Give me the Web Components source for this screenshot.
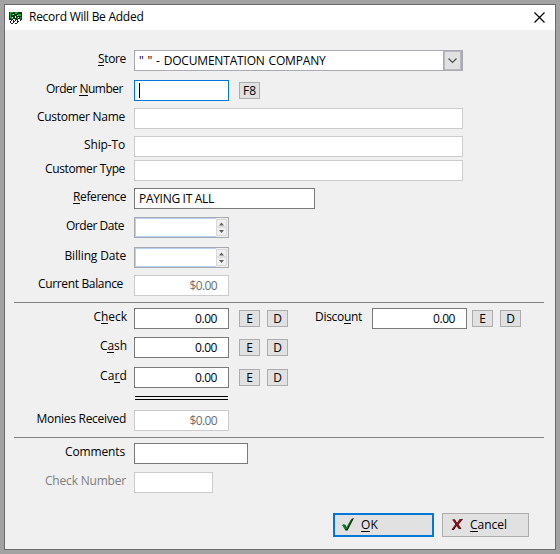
<!DOCTYPE html>
<html lang="en">
<head>
<meta charset="utf-8">
<title>Record Will Be Added</title>
<style>
html,body{margin:0;height:100%;overflow:hidden}
body{background:#a2a2a2;font:12px/16px "Open Sans","Noto Sans",sans-serif;color:#000}
</style>
</head>
<body>
<record-dialog></record-dialog>
<script>
const define=(name,html,ready)=>customElements.define(name,class extends HTMLElement{
  connectedCallback(){
    if(this.shadowRoot)return;
    const t=document.createElement('template');
    t.innerHTML=typeof html==='function'?html(this):html;
    this.attachShadow({mode:'open'}).append(t.content.cloneNode(true));
    if(ready)ready(this);
  }
});

/* A single-line text run spaced to a set width; "_" marks the access key. */
define('ui-text',el=>`<style>:host{display:block;white-space:pre;flex:none;height:16px}
span{display:inline-block}u{text-decoration:none;box-shadow:0 1px 0 currentColor;display:inline-block;height:14px;line-height:16px;vertical-align:top}</style><span>${el.getAttribute('text').replace(/_(.)/,'<u>$1</u>')}</span>`,
el=>{
  const s=el.shadowRoot.querySelector('span'),n=s.textContent.length,w=+el.getAttribute('w');
  if(w){s.style.letterSpacing=(w-s.getBoundingClientRect().width)/n+'px';el.style.width=w+'px';}
});

/* Bordered input box. kind: normal, off, focus, combo, date */
define('ui-field',el=>{
  const k=el.getAttribute('kind')||'normal',v=el.getAttribute('value')||'',w=el.getAttribute('w')||95;
  const c={normal:'#7a7a7a',off:'#cccccc',focus:'#0078d7',combo:'#a9aab4',date:'#a9aaaf'}[k];
  return `<style>:host{display:flex;box-sizing:border-box;flex:none;width:${w}px;height:21px;border:1px solid ${c};background:#fff;color:${k=='off'?'#6d6d6d':'#000'}}
  .v{padding:2px 0 0 4px;flex:1;${k=='combo'?'word-spacing:1px':''}}.r{padding:2px 11px 0 0;display:flex;justify-content:flex-end}
  i{display:block;width:1px;height:15px;background:#000;margin-top:0}
  .combo{width:19px;box-sizing:border-box;border:1px solid #a9aab4;border-width:0 1px 0 1px;box-shadow:inset 0 0 0 1px #b8b9be;background:#e1e1e1}
  .date{flex:1;border:1px solid #b3d3f3;border-right:0;box-sizing:border-box}
  .spin{width:12px;background:#f0f0f0}svg{display:block}</style>`+
  (k=='date'?`<div class="date"></div><div class="spin"><svg width="12" height="19"><path d="M.5 1.500h10v7.500H.5zM.5 9h10v8.500H.5z" fill="#f0f0f0" stroke="#d8d8d8"/><path d="M3 7.500h5L5.500 4.500zM3 12h5l-2.500 3z" fill="#606060"/></svg></div>`
  :`<div class="v ${el.hasAttribute('right')?'r':''}">${k=='focus'?'<i></i>':v?`<ui-text text='${v}' w="${el.getAttribute('tw')}"></ui-text>`:''}</div>`+
  (k=='combo'?'<div class="combo"><svg width="17" height="19"><path d="M4.500 7.500l4 4 4-4" fill="none" stroke="#505050" stroke-width="1.2"/></svg></div>':''))});

define('key-button',el=>`<style>:host{display:flex;justify-content:center;box-sizing:border-box;flex:none;width:21px;height:17px;border:1px solid #adadad;background:#e1e1e1}</style><ui-text text="${el.getAttribute('text')}" w="${el.getAttribute('tw')}"></ui-text>`);

/* Row: y gap above, label ending at x="end", then the slotted controls. */
define('form-row',el=>{
  const a=n=>el.getAttribute(n);
  return `<style>:host{display:flex;height:21px;margin-top:${a('gap')}px;padding-left:9px}
  .l{width:${a('end')-14}px;margin-right:${134-a('end')}px;padding-top:1px;display:flex;justify-content:flex-end;color:${el.hasAttribute('dim')?'#808080':'#000'}}
  ::slotted(key-button){margin:2px 0 0 7px}::slotted(key-button.first){margin-left:10px}::slotted(key-button.near){margin-left:5px}
  ::slotted(ui-text){margin:1px 10px 0 27px}</style>
  <div class="l"><ui-text text="${a('label')}" w="${a('w')}"></ui-text></div><slot></slot>`});

define('form-rule',el=>`<style>:host{display:block;height:${el.hasAttribute('double')?2:0}px;border-top:1px solid ${el.hasAttribute('double')?'#000;border-bottom:1px solid #000;width:93px;margin:8px 0 0 130px':'#838383;width:530px;margin:6px 0 0 9px'}}</style>`);

define('action-button',el=>{
  const ok=el.hasAttribute('primary');
  return `<style>:host{display:flex;align-items:flex-start;box-sizing:border-box;height:24px;width:${ok?101:87}px;border:${ok?'2px solid #0078d7':'1px solid #adadad'};background:#e1e1e1;padding:${ok?'2px 0 0 6px':'3px 0 0 7px'}}
  svg{flex:none;margin-right:6px}</style>
  <svg width="14" height="16" viewBox="0 0 14 16">${ok
   ?'<path d="M2 8.500l2-1 2 3.500 4.500-9L13 1 6.500 13.500H4.500z" fill="#111"/><path d="M1 8l2-1 2 4 4.500-8L12 1 5.500 12.500H4z" fill="#078a16"/>'
   :'<path d="M3 2.500h2l2 3.500 3-4h3L8.500 7.500l3 4.500H9L6.500 9 4 13H1.500l4-5.500z" fill="#210808"/><path d="M2 2.500h2.500L7 6l3-4h2L8 7.500l3 4H9L6.500 8.500 3.500 12H2l3.500-5z" fill="#900c18"/>'}</svg>
  <ui-text text="${el.getAttribute('text')}" w="${el.getAttribute('tw')}"></ui-text>`});

define('title-bar',`<style>:host{display:flex;height:25px;background:#fff}.i{margin:7px 0 0 4px}ui-text{margin:4px 0 0 7px}.x{margin:7px 10px 0 auto}</style>
<svg class="i" width="13" height="12" shape-rendering="crispEdges"><path fill="#10351b" d="M0 0h13v8H0z"/><path fill="#16ad31" d="M1 0h3v1H1zM6 0h3v1H6zM1 1h1v5H1zM3 2h2v1H3zM6 1h2v1H6zM9 2h3v2H9zM2 5h2v2H2zM8 5h1v2H8zM11 5h1v2h-1z"/><path fill="#eee" d="M4 2h1v1H4zM8 3h1v1H8zM3 5h1v1H3zM6 4h1v2H6zM9 5h1v1H9zM4 7h2v1H4zM9 7h2v1H9zM2 9h2v1H2zM6 9h2v1H6z"/><path fill="#222" d="M2 7h1v2H2zM4 8h1v1H4zM6 7h1v2H6zM8 7h1v2H8zM11 8h1v1h-1zM1 9h1v2H1zM4 9h1v2H4zM5 9h1v1H5zM8 10h1v1H8zM2 11h2v1H2zM6 11h2v1H6zM8 9h2v1H8z"/></svg>
<ui-text text="Record Will Be Added" w="114.500"></ui-text>
<svg class="x" width="11" height="11"><path d="M.5.5l10 10M10.500.5l-10 10" stroke="#000" stroke-width="1.15"/></svg>`);

define('record-dialog',`<style>:host{display:block;box-sizing:border-box;width:552px;height:546px;margin:4px;border:1px solid #6b6b6b;background:#f0f0f0}
.a{display:flex;gap:8px;margin:20px 0 0 328px}</style>
<title-bar></title-bar>
<form-row gap="20" label="_Store" w="28" end="126"><ui-field kind="combo" w="329" value="&quot; &quot; - DOCUMENTATION COMPANY" tw="186.500"></ui-field></form-row>
<form-row gap="9" label="Order _Number" w="77" end="123"><ui-field kind="focus"></ui-field><key-button class="first" text="F8" tw="13"></key-button></form-row>
<form-row gap="7" label="Customer Name" w="88" end="125"><ui-field kind="off" w="329"></ui-field></form-row>
<form-row gap="7" label="Ship-To" w="41" end="125"><ui-field kind="off" w="329"></ui-field></form-row>
<form-row gap="3" label="Customer Type" w="80" end="125"><ui-field kind="off" w="329"></ui-field></form-row>
<form-row gap="7" label="_Reference" w="53" end="126"><ui-field w="181" value="PAYING IT ALL" tw="75"></ui-field></form-row>
<form-row gap="8" label="Order Date" w="58" end="124"><ui-field kind="date"></ui-field></form-row>
<form-row gap="9" label="Billing Date" w="61.500" end="126"><ui-field kind="date"></ui-field></form-row>
<form-row gap="7" label="Current Balance" w="85" end="123"><ui-field kind="off" right value="$0.00" tw="27.500"></ui-field></form-row>
<form-rule></form-rule>
<form-row gap="5" label="C_heck" w="33.500" end="127"><ui-field right value="0.00" tw="22"></ui-field><key-button class="first" text="E" tw="6.500"></key-button><key-button text="D" tw="8.500"></key-button><ui-text text="Disco_unt" w="47"></ui-text><ui-field right value="0.00" tw="22"></ui-field><key-button class="near" text="E" tw="6.500"></key-button><key-button text="D" tw="8.500"></key-button></form-row>
<form-row gap="8" label="C_ash" w="27" end="127"><ui-field right value="0.00" tw="22"></ui-field><key-button class="first" text="E" tw="6.500"></key-button><key-button text="D" tw="8.500"></key-button></form-row>
<form-row gap="9" label="Ca_rd" w="27" end="127"><ui-field right value="0.00" tw="22"></ui-field><key-button class="first" text="E" tw="6.500"></key-button><key-button text="D" tw="8.500"></key-button></form-row>
<form-rule double></form-rule>
<form-row gap="10" label="Monies Received" w="89.500" end="126"><ui-field kind="off" right value="$0.00" tw="27.500"></ui-field></form-row>
<form-rule></form-rule>
<form-row gap="5" label="Comments" w="60" end="125"><ui-field w="114"></ui-field></form-row>
<form-row gap="8" dim label="Check Number" w="81" end="126"><ui-field kind="off" w="79"></ui-field></form-row>
<div class="a"><action-button primary text="_OK" tw="17"></action-button><action-button text="_Cancel" tw="37"></action-button></div>`);
</script>
</body>
</html>
